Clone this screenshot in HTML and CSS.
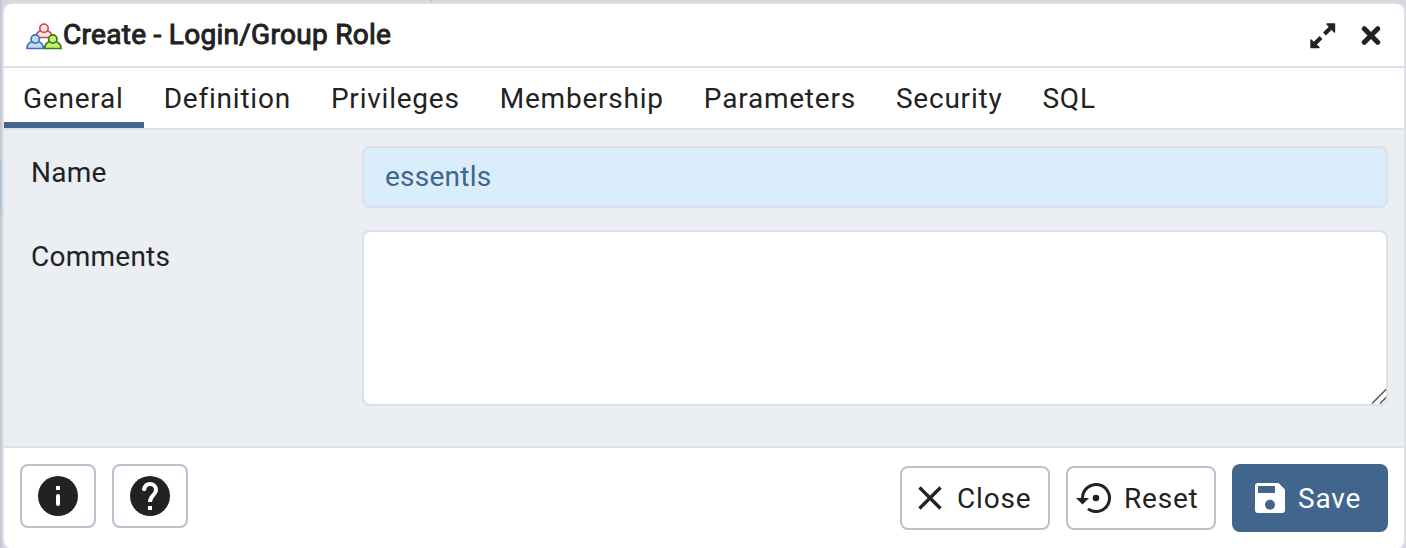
FILE: index.html
```html
<!DOCTYPE html>
<html lang="en">
<head>
<meta charset="utf-8">
<title>Create - Login/Group Role</title>
<link rel="stylesheet" href="styles.css">
</head>
<body>
<div class="dialog">
  <header class="header">
    <svg class="role-icon" width="36" height="27" viewBox="0 0 36 27" stroke-width="1.7">
      <g fill="#fbe4e4" stroke="#c0504d"><path d="M9.500 14.500C10 10.500 12 8.600 15 7.800H21C24 8.600 26 10.500 26.500 14.500Z"/><circle cx="18" cy="5.200" r="4.200"/></g>
      <g fill="#c3daf1" stroke="#426fc5"><path d="M1 25.500C1 21.500 3 19.400 6.500 18.500H11.900C15.300 19.400 17.300 21.500 17.300 25.500Z"/><circle cx="9.200" cy="16" r="4.200"/></g>
      <g fill="#c0f56c" stroke="#3b771d"><path d="M18.700 25.500C18.700 21.500 20.700 19.400 24.100 18.500H29.400C32.900 19.400 35 21.500 35 25.500Z"/><circle cx="26.800" cy="16" r="4.200"/></g>
    </svg>
    <h1 class="title">Create - Login/Group Role</h1>
    <svg class="expand" width="26" height="26" viewBox="0 0 26 26" fill="#222" stroke="#222">
      <path d="M17 1H24.500V9Z M1 17V24.500H9Z" stroke-width="1.400" stroke-linejoin="round"/>
      <path d="M14.500 11L21 4.500M11 14.500L4.500 21" stroke-width="4"/>
    </svg>
    <svg class="dismiss" width="20" height="20" viewBox="0 0 20 20" stroke="#222" stroke-width="5" stroke-linecap="round"><path d="M3.300 2.700L16.700 16.300M16.700 2.700L3.300 16.300"/></svg>
  </header>
  <nav class="tabs">
    <span class="tab active">General</span><span class="tab">Definition</span><span class="tab">Privileges</span><span class="tab">Membership</span><span class="tab">Parameters</span><span class="tab">Security</span><span class="tab">SQL</span>
  </nav>
  <main class="panel">
    <div class="row"><span class="label">Name</span><div class="field name">essentls</div></div>
    <div class="row"><span class="label">Comments</span><div class="field comments">
      <svg width="15" height="16" viewBox="0 0 15 16" stroke="#555" stroke-width="1.500"><path d="M1 15.500L15.500 1M9 15.500L15.500 9"/></svg>
    </div></div>
  </main>
  <footer class="footer">
    <span class="btn icon-btn"><svg width="40" height="40" viewBox="0 0 40 40"><circle cx="20" cy="20" r="20" fill="#222"/><path d="M18 10H22V14H18Z" fill="#fff"/><path d="M20 20V28" stroke="#fff" stroke-width="4" stroke-linecap="round"/></svg></span>
    <span class="btn icon-btn"><svg width="40" height="40" viewBox="0 0 40 40"><circle cx="20" cy="20" r="20" fill="#222"/><path d="M18 30H22V34H18Z" fill="#fff"/><path d="M14 13.500C14.700 10 17 8 20 8C23.400 8 26 10.600 26 14C26 19 20 19.500 20 26" stroke="#fff" stroke-width="4" fill="none"/><circle cx="14.100" cy="13.200" r="2" fill="#fff"/></svg></span>
    <span class="spacer"></span>
    <span class="btn close"><svg width="24" height="24" viewBox="0 0 24 24" stroke="#222" stroke-width="3.300"><path d="M1.500 1.500L22.500 22.500M22.500 1.500L1.500 22.500"/></svg><span class="caption">Close</span></span>
    <span class="btn reset"><svg width="36" height="30" viewBox="0 0 36 30" fill="none" stroke="#222" stroke-width="3"><path d="M6.500 16V15A13.500 13.500 0 1 1 12 25.900"/><path d="M0 15H13L6.500 21.500Z" fill="#222" stroke="none"/><circle cx="20" cy="15" r="3.300" fill="#222" stroke="none"/></svg><span class="caption">Reset</span></span>
    <span class="btn save"><svg width="30" height="30" viewBox="0 0 30 30"><path d="M3 0H23.500L30 6.500V27A3 3 0 0 1 27 30H3A3 3 0 0 1 0 27V3A3 3 0 0 1 3 0Z" fill="#fff"/><path d="M3 3H20V10H3Z" fill="#41658c"/><circle cx="15" cy="21.700" r="5" fill="#41658c"/></svg><span class="caption">Save</span></span>
  </footer>
</div>
</body>
</html>
```
FILE: styles.css
```css
* { box-sizing: border-box; }
body {
  margin: 0;
  height: 548px;
  overflow: hidden;
  padding: 2px 0 0 2px;
  background:
    linear-gradient(#b3c4d8, #b3c4d8) 0 160px / 2px 54px no-repeat,
    linear-gradient(#bfc3cb, #bfc3cb) 430px 0 / 2px 2px no-repeat,
    linear-gradient(90deg, #c5c9d3 0, #c5c9d3 2px, #d5d8df 2px, #d5d8df 100%);
  font: 28px/32px Roboto, sans-serif;
  color: #222;
}
svg { display: block; flex: none; }
.dialog {
  width: 1404px;
  height: 546px;
  border: 2px solid #dde0e6;
  border-bottom: 0;
  border-radius: 10px 10px 8px 8px;
  overflow: hidden;
  background: #fff;
  display: flex;
  flex-direction: column;
}
.header {
  height: 64px;
  flex: none;
  border-bottom: 2px solid #dde0e6;
  display: flex;
  align-items: center;
  padding: 0 23px 0 22px;
}
.role-icon { margin-top: 2px; }
.title {
  font-size: 28px;
  line-height: 32px;
  font-weight: 400;
  letter-spacing: 0.29px;
  -webkit-text-stroke: 1px #222;
  margin: 0 auto 0 1px;
}
.expand { margin: 1px 25px 0 0; }
.dismiss { margin-top: 1px; }
.tabs {
  height: 62px;
  flex: none;
  display: flex;
  border-bottom: 2px solid #dde0e6;
  letter-spacing: 0.78px;
}
.tab { padding: 15px 20px 0; }
.tab:first-child { padding-left: 19px; }
.active { box-shadow: inset 0 -6px #41658c; }
.panel {
  height: 318px;
  flex: none;
  border-bottom: 2px solid #dde0e6;
  background: #ebeef3;
  padding: 16px 16px 0 27px;
  letter-spacing: 0.25px;
  display: flex;
  flex-direction: column;
  gap: 22px;
}
.row { display: flex; }
.label { width: 331px; padding-top: 11px; }
.field {
  flex: 1;
  border: 2px solid #dde0e6;
  border-radius: 8px;
}
.name { height: 62px; background: #daedfb; color: #41658c; padding: 13px 21px; }
.comments {
  height: 176px;
  background: #fff;
  display: flex;
  align-items: flex-end;
  justify-content: flex-end;
}
.footer {
  flex: 1;
  display: flex;
  padding: 16px 16px 0;
  letter-spacing: 0.8px;
}
.btn {
  height: 64px;
  border: 2px solid #bac1cd;
  border-radius: 8px;
  display: flex;
  align-items: center;
}
.caption { padding-top: 2px; }
.icon-btn { width: 76px; margin-right: 16px; justify-content: center; }
.spacer { flex: 1; }
.close, .reset { width: 150px; margin: 2px 16px 0 0; }
.close { padding-left: 16px; gap: 15px; }
.reset { padding-left: 8px; gap: 12px; }
.save {
  width: 156px;
  height: 68px;
  border: 0;
  background: #41658c;
  color: #fff;
  padding-left: 23px;
  gap: 13px;
}
```
